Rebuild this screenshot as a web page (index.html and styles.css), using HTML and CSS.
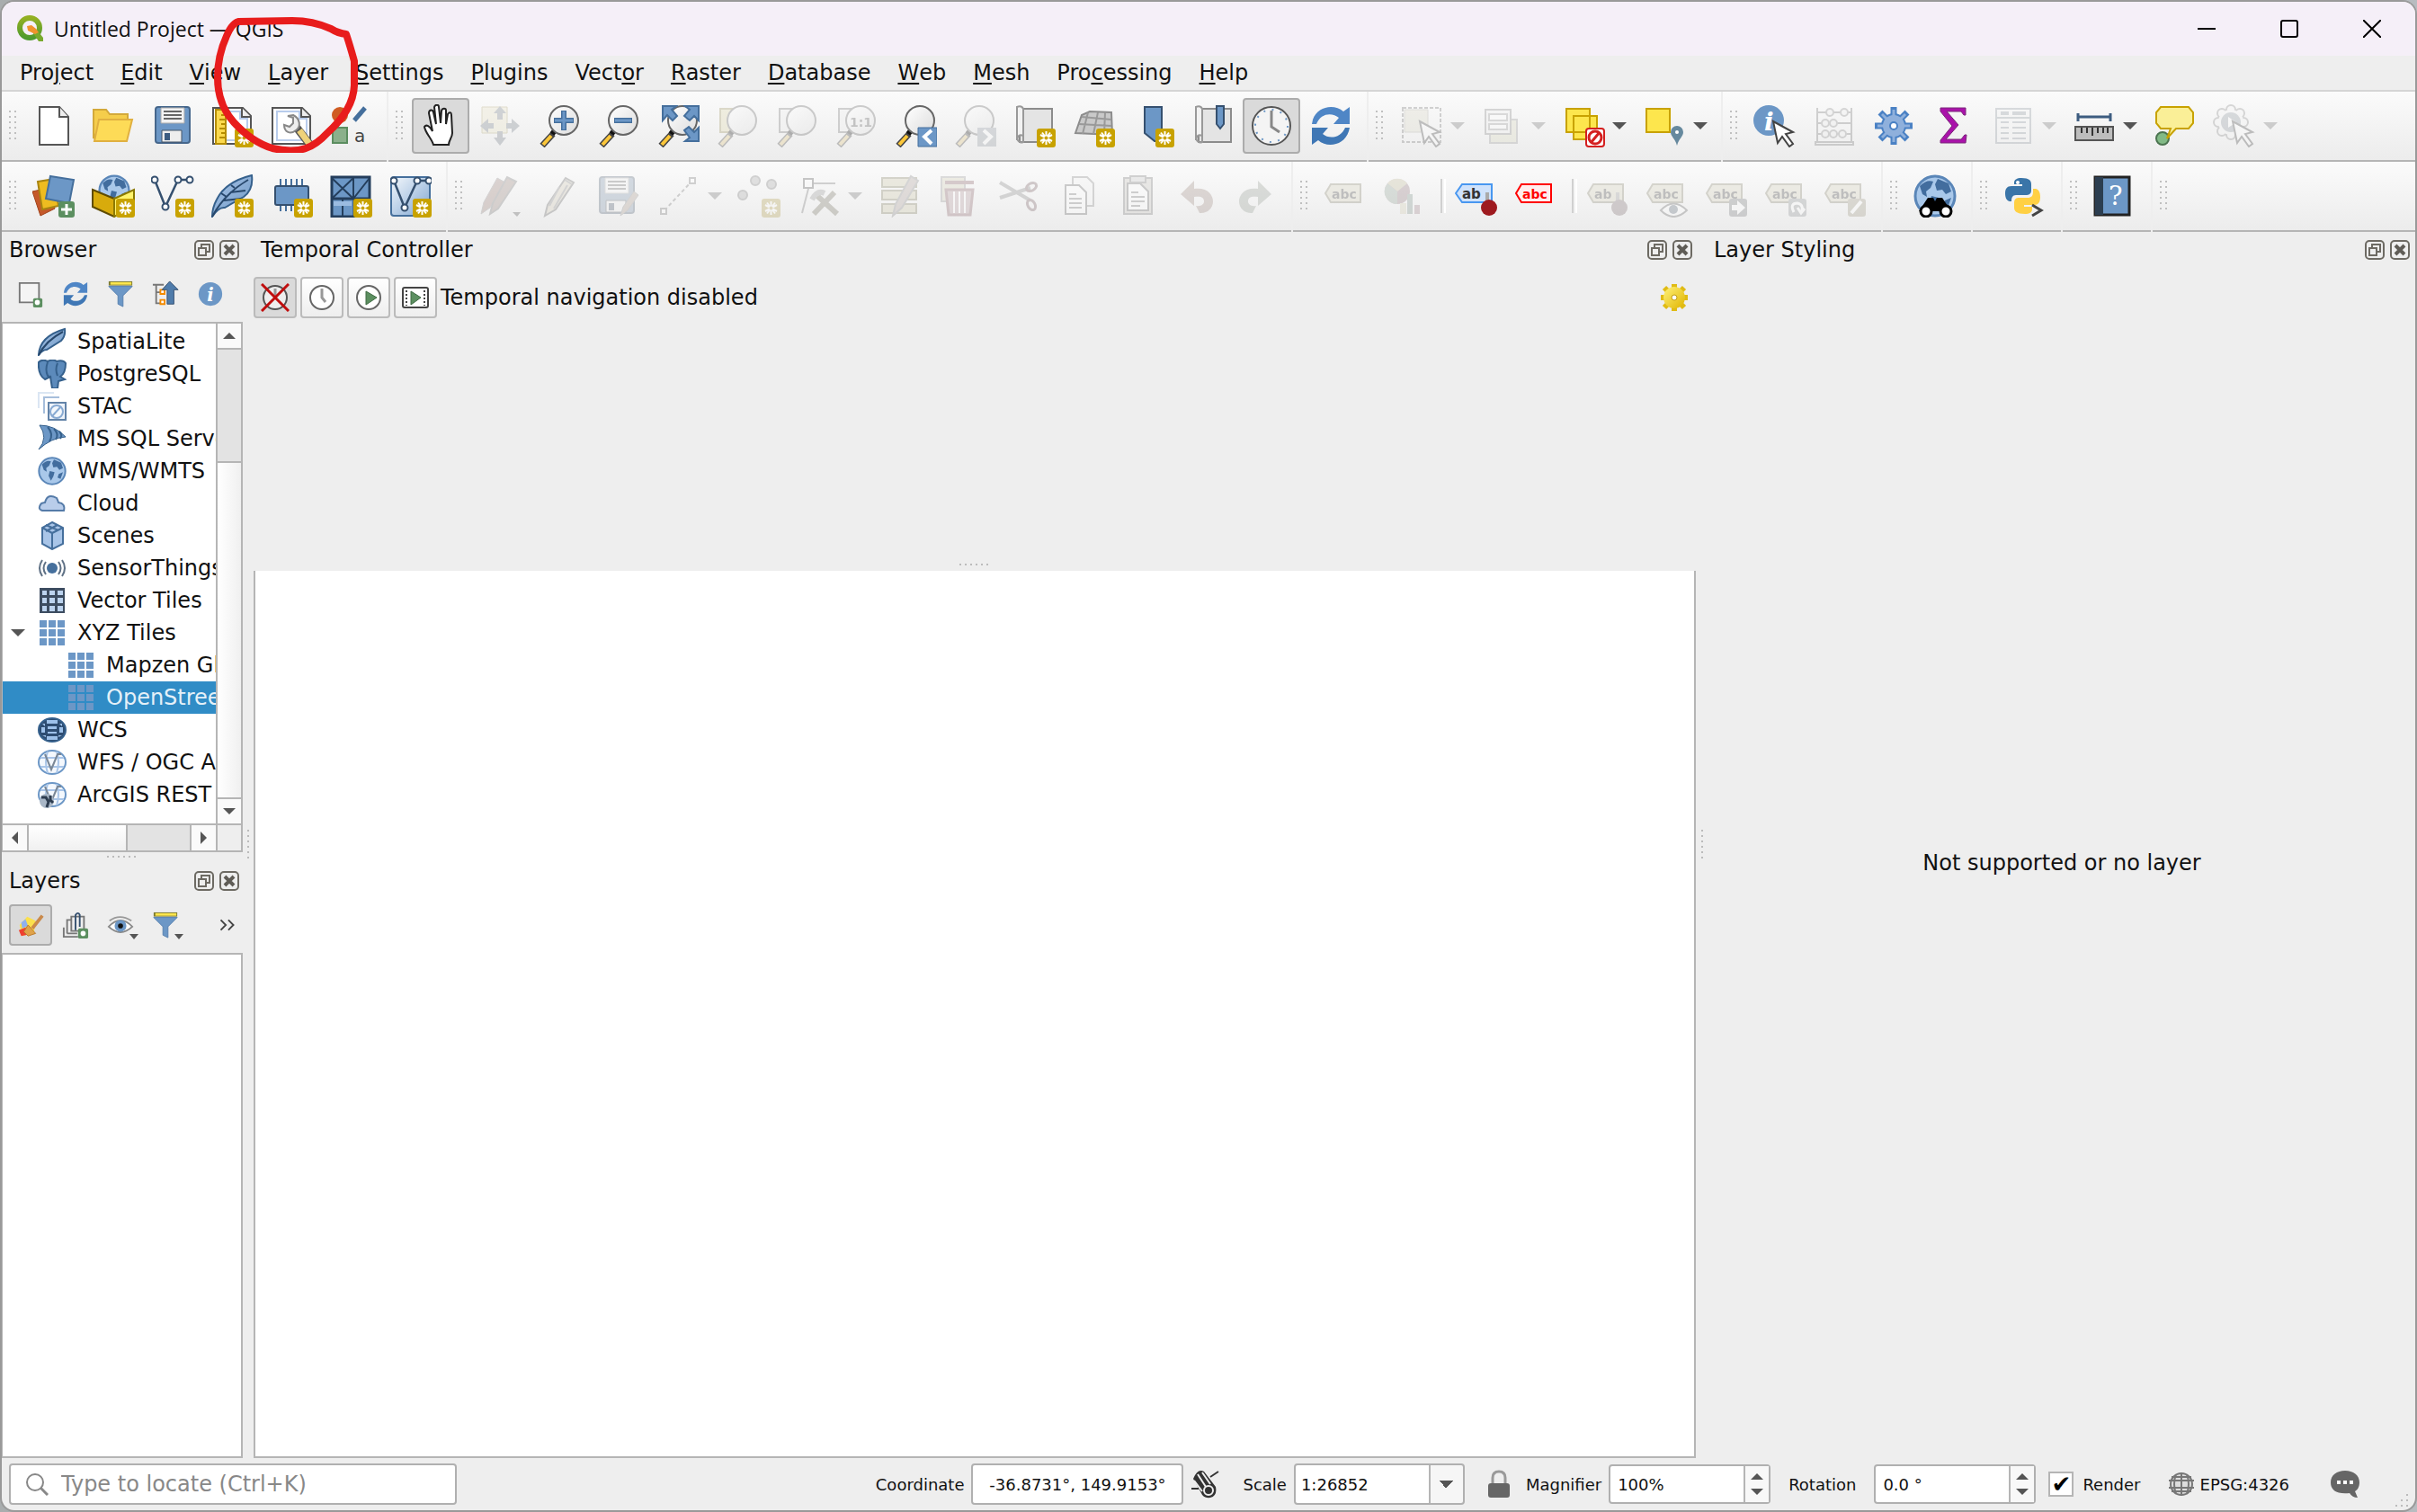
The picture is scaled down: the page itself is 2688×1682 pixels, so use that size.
FILE: index.html
```html
<!DOCTYPE html>
<html lang="en">
<head>
<meta charset="utf-8">
<title>Untitled Project — QGIS</title>
<link rel="stylesheet" href="styles.css">
</head>
<body>
<svg class="defs" aria-hidden="true">
<defs>
<linearGradient id="g-blue" x1="0" y1="0" x2="1" y2="1"><stop offset="0" stop-color="#a9c5e8"/><stop offset="1" stop-color="#6d97c4"/></linearGradient>
<linearGradient id="g-pale" x1="0" y1="0" x2="1" y2="1"><stop offset="0" stop-color="#f4f8fc"/><stop offset="1" stop-color="#7fa6d2"/></linearGradient>
<linearGradient id="g-logo" x1="0" y1="0" x2="0" y2="1"><stop offset="0" stop-color="#93b023"/><stop offset="1" stop-color="#4f9a2e"/></linearGradient>
<linearGradient id="g-gold" x1="0" y1="0" x2="1" y2="1"><stop offset="0" stop-color="#fff27a"/><stop offset="1" stop-color="#e0b400"/></linearGradient>
<linearGradient id="g-glass" x1="0" y1="0" x2="1" y2="1"><stop offset="0" stop-color="#fff"/><stop offset="1" stop-color="#dcdcdc"/></linearGradient>
<symbol id="star" viewBox="0 0 48 48"><rect x="27" y="27" width="21" height="21" rx="3" fill="#c8a200"/><path d="M37.500 30v15M31 34l13 7M44 34l-13 7M33 31.500l9 12M42 31.500l-9 12" stroke="#fff" stroke-width="2"/><circle cx="37.500" cy="37.500" r="2" fill="#c8a200"/></symbol>
<symbol id="lens" viewBox="0 0 48 48"><path d="M17 33L5 46" stroke="#444" stroke-width="7"/><path d="M15 35L6 45" stroke="#fcc73a" stroke-width="4"/><path d="M20 28l-4 5" stroke="#111" stroke-width="6"/><circle cx="29" cy="18" r="16" fill="url(#g-glass)" stroke="#666" stroke-width="2"/></symbol>
<symbol id="cursor" viewBox="0 0 48 48"><path d="M22 19l22 12-8 2 8 11-4 3-8-11-5 7z" fill="#fff" stroke="#444" stroke-width="2"/></symbol>
<symbol id="new" viewBox="0 0 48 48"><path d="M8 3h22l10 11v31H8z" fill="#fff" stroke="#555" stroke-width="2"/><path d="M30 3v11h10" fill="#eee" stroke="#555" stroke-width="2"/></symbol>
<symbol id="open" viewBox="0 0 48 48"><path d="M2 6h14l4 5h20v8H12L2 38z" fill="#f5cd4b" stroke="#d3a93a" stroke-width="2"/><path d="M8 17h37l-6 24H3z" fill="#fddb57" stroke="#e0b040" stroke-width="2"/></symbol>
<symbol id="save" viewBox="0 0 48 48"><rect x="5" y="3" width="38" height="40" rx="3" fill="#6c97c6" stroke="#46678c" stroke-width="2"/><path d="M11 4h26v17H11z" fill="#f2f2f2" stroke="#aaa"/><path d="M14 8h20M14 12h20M14 16h20" stroke="#666" stroke-width="2"/><path d="M12 29h22v13H12z" fill="#eee" stroke="#456" stroke-width="1"/><path d="M15 32h6v8h-6z" fill="#3d5c80"/></symbol>
<symbol id="layout" viewBox="0 0 48 48"><path d="M3 4h33l9 9v31H3z" fill="#fff" stroke="#555" stroke-width="2"/><path d="M35 4v10h10" fill="#eee" stroke="#555" stroke-width="2"/><path d="M8 8h25v8h8v24H8z" fill="none" stroke="#b8ccec" stroke-width="2"/></symbol>
<symbol id="newlayout" viewBox="0 0 48 48"><use href="#layout"/><path d="M6 6h11v38H6z" fill="#fbd94e" stroke="#b58d00" stroke-width="2"/><path d="M12 12h5M10 17h7M12 22h5M10 27h7M12 32h5M10 37h7" stroke="#b58d00" stroke-width="2"/><use href="#star"/></symbol>
<symbol id="manager" viewBox="0 0 48 48"><use href="#layout"/><path d="M30 26l14 18" stroke="#555" stroke-width="9"/><path d="M33 29l11 15" stroke="#eed27a" stroke-width="7"/><path d="M20 13l6 2v6l-4 4-6-2c0 8 7 11 13 6 6-4 5-13-3-17z" fill="#eee" stroke="#888" stroke-width="2"/></symbol>
<symbol id="style" viewBox="0 0 48 48"><circle cx="12" cy="12" r="9" fill="#cf5c22"/><path d="M28 18L40 4" stroke="#456f9c" stroke-width="5"/><path d="M4 26h16v17H4z" fill="#8bb08b" stroke="#5b8d5f" stroke-width="2"/><text x="28" y="42" font-family="DejaVu Sans" font-size="20" fill="#444">a</text></symbol>
<symbol id="pan" viewBox="0 0 48 48"><path d="M16 45c-2-7-9-13-10-20 2-3 6-1 9 5l-4-20c0-4 4-5 5-1l3 13-2-19c1-3 5-3 5 0l2 18 1-14c1-3 5-3 5 0v15l2-11c2-3 4-2 4 1l1 20c0 5-4 8-4 13z" fill="#fff" stroke="#222" stroke-width="2"/></symbol>
<symbol id="pansel" viewBox="0 0 48 48"><path d="M4 3h28v29H4z" fill="#f0e4a8" stroke="#b9a13a"/><path d="M24 2l7 8h-4v7h-6v-7h-4zM24 46l7-9h-4v-7h-6v7h-4zM2 24l9-8v5h6v6h-6v5zM46 24l-9-8v5h-6v6h6v5z" fill="#6f7f92"/></symbol>
<symbol id="zoomin" viewBox="0 0 48 48"><use href="#lens"/><path d="M29 7v22M18 18h22" stroke="#456f9c" stroke-width="6"/><path d="M29 8v20M19 18h20" stroke="#6c97c6" stroke-width="3"/></symbol>
<symbol id="zoomout" viewBox="0 0 48 48"><use href="#lens"/><path d="M19 18h20" stroke="#456f9c" stroke-width="6"/><path d="M20 18h18" stroke="#6c97c6" stroke-width="3"/></symbol>
<symbol id="zoomfull" viewBox="0 0 48 48"><use href="#lens"/><path d="M7 2h15l-5 4 6 7-5 5-6-6-5 6zM47 2v16l-5-5-5 5-6-5 6-7-5-4zM47 41V26l-5 5-6-6-5 4 6 8-5 4z" fill="#6c97c6" stroke="#456f9c" stroke-width="2"/></symbol>
<symbol id="zoomsel" viewBox="0 0 48 48"><path d="M5 5h20v26H5z" fill="#e8d97c" stroke="#a8942c" stroke-width="2"/><use href="#lens"/></symbol>
<symbol id="zoomlayer" viewBox="0 0 48 48"><path d="M5 5h20v26H5z" fill="#eee" stroke="#777" stroke-width="2"/><use href="#lens"/></symbol>
<symbol id="zoomnative" viewBox="0 0 48 48"><use href="#zoomlayer"/><text x="17" y="25" font-family="DejaVu Sans" font-weight="bold" font-size="14" fill="#555">1:1</text></symbol>
<symbol id="zoomlast" viewBox="0 0 48 48"><use href="#lens"/><path d="M27 26h21v21H27z" fill="#6c97c6" stroke="#456f9c" stroke-width="1"/><path d="M42 29l-8 7 8 8" fill="none" stroke="#fff" stroke-width="4"/></symbol>
<symbol id="zoomnext" viewBox="0 0 48 48"><use href="#lens"/><path d="M27 26h21v21H27z" fill="#8a9aab"/><path d="M34 29l8 7-8 8" fill="none" stroke="#fff" stroke-width="4"/></symbol>
<symbol id="map" viewBox="0 0 48 48"><path d="M8 5h36v37H8z" fill="#e4e4e4" stroke="#8c8c8c" stroke-width="2"/><path d="M5 3q5-2 7 2v30q-6-3-7 5z" fill="#f2f2f2" stroke="#999" stroke-width="2"/><path d="M5 38q2 6 7 4V35" fill="none" stroke="#999" stroke-width="2"/></symbol>
<symbol id="newmap" viewBox="0 0 48 48"><use href="#map"/><use href="#star"/></symbol>
<symbol id="map3d" viewBox="0 0 48 48"><path d="M4 32L11 12l9-4 24 1 1 25z" fill="#c9c9c9" stroke="#8c8c8c" stroke-width="2"/><path d="M8 22l36 2M11 14l33 3M18 9l-6 24M29 9l-5 24M37 9l-1 24" stroke="#999" stroke-width="2"/><use href="#star"/></symbol>
<symbol id="bookmark" viewBox="0 0 48 48"><path d="M15 3h19v38h-8l-11-9z" fill="#6c97c6" stroke="#35506f" stroke-width="2"/><use href="#star"/></symbol>
<symbol id="bookmarks" viewBox="0 0 48 48"><use href="#map" x="1"/><path d="M29 2h8v20l-4 5-4-5z" fill="#6c97c6" stroke="#35506f" stroke-width="2"/></symbol>
<symbol id="clock" viewBox="0 0 48 48"><circle cx="24" cy="24" r="21" fill="#f4f4f4" stroke="#555" stroke-width="2"/><circle cx="24" cy="24" r="18" fill="none" stroke="#6c97c6" stroke-width="2" stroke-dasharray="2 7.420"/><path d="M24 7v18l9 6" fill="none" stroke="#888" stroke-width="3"/></symbol>
<symbol id="refresh" viewBox="0 0 48 48"><path d="M4 17C9 2 28-1 38 8l7-5v19H27l6-7C26 9 13 9 8 22H3z" fill="#4f86c6"/><path d="M44 30C39 46 20 49 10 40l-7 5V26h18l-6 7c7 6 20 5 25-7h5z" fill="#3f77b5"/></symbol>
<symbol id="select" viewBox="0 0 48 48"><path d="M3 4h42v38H3z" fill="none" stroke="#777" stroke-width="2" stroke-dasharray="4 2"/><path d="M5 6h26v25H5z" fill="#dcd9b6" stroke="#a8a592"/><use href="#cursor"/></symbol>
<symbol id="form" viewBox="0 0 48 48"><path d="M10 17h30v26H10z" fill="#dcd9a8" stroke="#999" stroke-width="2"/><path d="M5 6h28v27H5z" fill="#eee" stroke="#888" stroke-width="2"/><path d="M9 11h20v7H9zM9 22h20v6H9z" fill="#fff" stroke="#999" stroke-width="2"/></symbol>
<symbol id="deselect" viewBox="0 0 48 48"><path d="M5 5h26v26H5zM13 13h26v26H13z" fill="#fde64d" stroke="#c8a200" stroke-width="2"/><rect x="27" y="27" width="20" height="20" rx="3" fill="#fff" stroke="#d42020" stroke-width="2"/><circle cx="37" cy="37" r="7" fill="none" stroke="#d42020" stroke-width="3"/><path d="M32 43l10-12" stroke="#d42020" stroke-width="3"/></symbol>
<symbol id="selloc" viewBox="0 0 48 48"><path d="M4 5h26v26H4z" fill="#fde64d" stroke="#c8a200" stroke-width="2"/><path d="M38 46c-2-8-7-10-7-15a7 7 0 0 1 14 0c0 5-5 7-7 15z" fill="#66899e"/><circle cx="38" cy="31" r="2" fill="#fff"/></symbol>
<symbol id="identify" viewBox="0 0 48 48"><circle cx="17" cy="18" r="17" fill="#6c97c6"/><text x="12" y="29" font-family="DejaVu Serif" font-style="italic" font-weight="bold" font-size="28" fill="#fff">i</text><use href="#cursor"/></symbol>
<symbol id="abacus" viewBox="0 0 48 48"><path d="M5 4v38M43 4v38M5 9h38M5 21h38M5 33h38" stroke="#777" stroke-width="2"/><path d="M3 42h42v3H3z" fill="none" stroke="#777" stroke-width="2"/><g fill="#eee" stroke="#888" stroke-width="2"><circle cx="19" cy="9" r="4"/><circle cx="35" cy="9" r="4"/><circle cx="14" cy="21" r="4"/><circle cx="23" cy="21" r="4"/><circle cx="14" cy="33" r="4"/><circle cx="23" cy="33" r="4"/><circle cx="33" cy="33" r="4"/></g></symbol>
<symbol id="gear" viewBox="0 0 48 48"><path d="M24 3v42M3 24h42M9 9l30 30M39 9L9 39" stroke="#4a81c4" stroke-width="7"/><circle cx="24" cy="24" r="13" fill="#8fb0dc" stroke="#4a81c4" stroke-width="2"/><path d="M24 6v36M6 24h36M11 11l26 26M37 11L11 37" stroke="#8fb0dc" stroke-width="3"/><circle cx="24" cy="24" r="4" fill="#fff" stroke="#4a81c4" stroke-width="2"/></symbol>
<symbol id="sigma" viewBox="0 0 48 48"><path d="M10 4h28v8h-2l-3-4H17l13 15-14 16h17l4-5h2l-1 9H10v-3l13-16L10 8z" fill="#aa12aa" stroke="#7a2a7a" stroke-width="1"/></symbol>
<symbol id="table" viewBox="0 0 48 48"><path d="M5 5h38v38H5z" fill="#f4f4f4" stroke="#8898a8" stroke-width="2"/><path d="M5 15h38" stroke="#8898a8" stroke-width="2"/><path d="M10 10h9M23 10h15" stroke="#8898a8" stroke-width="4"/><path d="M10 20h9M23 20h15M10 26h9M23 26h15M10 32h9M23 32h15M10 38h9M23 38h15" stroke="#8898a8" stroke-width="2"/></symbol>
<symbol id="measure" viewBox="0 0 48 48"><path d="M6 10v9M42 10v9M6 14h36" stroke="#3d5c80" stroke-width="3"/><path d="M3 25h42v15H3z" fill="#bdbdbd" stroke="#555" stroke-width="2"/><path d="M10 26v6M16 26v6M22 26v9M28 26v6M34 26v6M39 26v6" stroke="#333" stroke-width="2"/></symbol>
<symbol id="tip" viewBox="0 0 48 48"><path d="M4 38a7 7 0 1 0 14 0 7 7 0 1 0-14 0" fill="#82ba86" stroke="#4c7450" stroke-width="2"/><path d="M9 3h31l5 6v12l-5 6H26L16 38l4-11H9l-5-6V9z" fill="#faef97" stroke="#c8a200" stroke-width="2"/></symbol>
<symbol id="action" viewBox="0 0 48 48"><g fill="#f4f4f4" stroke="#888" stroke-width="2"><circle cx="20" cy="6" r="5"/><circle cx="30" cy="10" r="5"/><circle cx="34" cy="20" r="5"/><circle cx="30" cy="30" r="5"/><circle cx="20" cy="34" r="5"/><circle cx="10" cy="30" r="5"/><circle cx="6" cy="20" r="5"/><circle cx="10" cy="10" r="5"/></g><circle cx="20" cy="20" r="14" fill="#f4f4f4"/><circle cx="20" cy="20" r="11" fill="#8898a8"/><path d="M17 14l9 6-9 6z" fill="#fff"/><use href="#cursor"/></symbol>
<symbol id="dsm" viewBox="0 0 48 48"><path d="M0 19l18-4 7 23-16 8z" fill="#c5592b" stroke="#a1441b"/><path d="M6 8l19-3 4 30-18 4z" fill="#eebc20" stroke="#a88411" stroke-width="2"/><path d="M20 2l26 4-5 26-26-5z" fill="#6c97c6" stroke="#456f9c" stroke-width="2"/><rect x="29" y="30" width="18" height="18" rx="3" fill="#5c8f60"/><path d="M38 33v12M32 39h12" stroke="#fff" stroke-width="3"/></symbol>
<symbol id="globe" viewBox="0 0 48 48"><circle cx="24" cy="24" r="22" fill="#a9c8ea" stroke="#5a86b8" stroke-width="3"/><path d="M7 13q8-8 15-5l-3 7-5 4 1 6-5-3zM27 5l12 5 3 9-6 3-4-5-6 1-2-7zM20 24l8 2-2 7-4 7-4-8zM35 29l7-3-4 11-5-2z" fill="#426d9e"/></symbol>
<symbol id="gpkg" viewBox="0 0 48 48"><use href="#globe" x="7" y="0" width="36" height="36"/><path d="M1 17l24 10v20L1 36z" fill="#d8ab0c" stroke="#5f4c00" stroke-width="2"/><path d="M25 27l22-10v19L25 47z" fill="#fff36c" stroke="#8b7900" stroke-width="2"/><use href="#star"/></symbol>
<symbol id="vpoly" viewBox="0 0 48 48"><path d="M4 6l12 30L30 6h12" fill="none" stroke="#35506f" stroke-width="2.500"/><g fill="#fff" stroke="#35506f" stroke-width="2"><circle cx="4" cy="6" r="3.500"/><circle cx="16" cy="36" r="3.500"/><circle cx="30" cy="6" r="3.500"/><circle cx="43" cy="6" r="3.500"/></g></symbol>
<symbol id="shp" viewBox="0 0 48 48"><use href="#vpoly"/><use href="#star"/></symbol>
<symbol id="feather" viewBox="0 0 48 48"><path d="M2 47q0-10 5-19Q17 8 46 1q2 16-9 24L16 37q-7-1-14 10z" fill="url(#g-blue)" stroke="#35608c" stroke-width="2"/><path d="M2 47Q15 22 42 6M15 29l19-2M22 20l17-2M12 21l6 4M23 12l4 3" fill="none" stroke="#28486c" stroke-width="2"/></symbol>
<symbol id="quill" viewBox="0 0 32 32"><path d="M1 31Q2 10 30 2q1 8-4 13L10 25q-5 0-9 6z" fill="url(#g-blue)" stroke="#35608c" stroke-width="2"/><path d="M1 31Q9 15 28 5" fill="none" stroke="#28486c" stroke-width="2"/></symbol>
<symbol id="spatialite" viewBox="0 0 48 48"><use href="#feather"/><use href="#star"/></symbol>
<symbol id="memory" viewBox="0 0 48 48"><path d="M12 5v36M18 5v36M24 5v36M30 5v36M36 5v36" stroke="#456f9c" stroke-width="2"/><rect x="6" y="13" width="37" height="21" rx="2" fill="#6c97c6" stroke="#35506f" stroke-width="2"/><use href="#star"/></symbol>
<symbol id="mesh" viewBox="0 0 48 48"><path d="M3 3h42v24H3zM3 27h25v20H3z" fill="#6c97c6" stroke="#243e5c" stroke-width="3"/><path d="M27 3v24M3 4l24 23M27 4L3 27M45 4L27 27M15 27v20" stroke="#243e5c" stroke-width="2"/><path d="M5 30h20v5H5z" fill="#9bbbe0"/><use href="#star"/></symbol>
<symbol id="virtual" viewBox="0 0 48 48"><rect x="3" y="3" width="43" height="43" rx="3" fill="url(#g-pale)" stroke="#456f9c" stroke-width="2"/><use href="#vpoly" x="2" y="1"/><use href="#star"/></symbol>
<symbol id="pencil" viewBox="0 0 48 48"><path d="M8 46l3-12L31 4l9 5-20 30z" fill="#d8c9a0" stroke="#666" stroke-width="2"/><path d="M30 6l8 5M24 14L13 35M33 12L18 38" stroke="#888" stroke-width="2"/></symbol>
<symbol id="pencils" viewBox="0 0 48 48"><path d="M3 44l3-13L21 4l9 5-17 28z" fill="#b07a6a" stroke="#888"/><path d="M13 44l3-12L32 3l10 5-20 30z" fill="#a88070" stroke="#777" stroke-width="2"/><path d="M38 42h9l-4 5z" fill="#555"/></symbol>
<symbol id="saveedit" viewBox="0 0 48 48"><use href="#save" x="-2"/><path d="M26 46l3-10 12-17 5 4-12 17z" fill="#b8977f" stroke="#888"/></symbol>
<symbol id="segment" viewBox="0 0 48 48"><path d="M8 40L38 8" stroke="#777" stroke-width="2" stroke-dasharray="4 3"/><path d="M4 38h6v6H4zM36 4h6v6h-6z" fill="#fff" stroke="#777" stroke-width="2"/></symbol>
<symbol id="points" viewBox="0 0 48 48"><g fill="#aaa" stroke="#777" stroke-width="2"><circle cx="20" cy="7" r="5"/><circle cx="38" cy="11" r="5"/><circle cx="6" cy="23" r="5"/></g><use href="#star"/></symbol>
<symbol id="vertex" viewBox="0 0 48 48"><path d="M5 43l8-31M15 10h27" stroke="#777" stroke-width="2"/><path d="M7 5h10v10H7z" fill="#fff" stroke="#555" stroke-width="2"/><path d="M18 44l23-24M22 24l22 20" stroke="#7d7656" stroke-width="6"/><path d="M16 28q6-11 14-7" fill="none" stroke="#999" stroke-width="6"/></symbol>
<symbol id="multiedit" viewBox="0 0 48 48"><path d="M5 4h38v10H5zM5 18h38v10H5zM5 33h38v10H5z" fill="#d2cb8a" stroke="#888246" stroke-width="2"/><path d="M17 46l3-13L37 2l8 5-18 30z" fill="#b99d94" stroke="#888" stroke-width="2"/></symbol>
<symbol id="trash" viewBox="0 0 48 48"><path d="M5 3h26v27H5z" fill="#d7d2a0" stroke="#999" stroke-width="2"/><path d="M9 9h32" stroke="#a85a66" stroke-width="4"/><path d="M10 17h30l-3 28H13z" fill="#c9949c" stroke="#a85a66" stroke-width="3"/><path d="M19 19v24M25 19v24M31 19v24" stroke="#fff" stroke-width="2"/></symbol>
<symbol id="cut" viewBox="0 0 48 48"><path d="M4 9l34 20M4 26l34-11" stroke="#888" stroke-width="4"/><g fill="none" stroke="#8c5a62" stroke-width="3"><ellipse cx="39" cy="14" rx="6" ry="4" transform="rotate(-30 39 14)"/><ellipse cx="39" cy="34" rx="6" ry="4" transform="rotate(60 39 34)"/></g></symbol>
<symbol id="copy" viewBox="0 0 48 48"><path d="M19 3h16l7 7v25H19z" fill="#f4f4f4" stroke="#888" stroke-width="2"/><path d="M11 12h15l8 8v24H11z" fill="#fff" stroke="#666" stroke-width="2"/><path d="M15 22h8M15 27h14M15 32h14M15 37h14" stroke="#777" stroke-width="2"/></symbol>
<symbol id="paste" viewBox="0 0 48 48"><path d="M10 4h31v40H10z" fill="#c9c4b8" stroke="#777" stroke-width="2"/><path d="M14 10h14l9 9v21H14z" fill="#fff" stroke="#666" stroke-width="2"/><path d="M17 2h17v7H17z" fill="#ccc" stroke="#777" stroke-width="2"/><path d="M18 20h8M18 25h15M18 30h15M18 35h10" stroke="#777" stroke-width="2"/></symbol>
<symbol id="undo" viewBox="0 0 48 48"><path d="M7 22L22 7v9c15-2 21 7 21 14 0 8-7 14-15 13l-4-8c6 1 9-2 9-5 0-5-4-6-11-5v10z" fill="#b08a7a"/></symbol>
<symbol id="redo" viewBox="0 0 48 48"><path d="M42 22L27 7v9C12 14 6 23 6 30c0 8 7 14 15 13l4-8c-6 1-9-2-9-5 0-5 4-6 11-5v10z" fill="#93a08e"/></symbol>
<symbol id="tag" viewBox="0 0 48 48"><path d="M2 21l6-10h33v20H8z" fill="#d9d2a4" stroke="#8c8659" stroke-width="2"/></symbol>
<symbol id="abc" viewBox="0 0 48 48"><use href="#tag"/><text x="9" y="27" font-family="DejaVu Sans" font-weight="bold" font-size="14" fill="#444">abc</text></symbol>
<symbol id="chart" viewBox="0 0 48 48"><circle cx="16" cy="19" r="14" fill="#a77480"/><path d="M16 19L5 10a14 14 0 0 1 22 0z" fill="#c9bc7a"/><path d="M16 19L5 10a14 14 0 0 0 11 23z" fill="#86a78d"/><path d="M19 32h7v12h-7z" fill="#d9cf99"/><path d="M27 22h6v22h-6z" fill="#729a8a"/><path d="M35 34h6v10h-6z" fill="#b98090"/></symbol>
<symbol id="pinlabel" viewBox="0 0 48 48"><path d="M1 21l7-10h33v20H8z" fill="#cfe2fb" stroke="#4897f0" stroke-width="2"/><text x="8" y="27" font-family="DejaVu Sans" font-weight="bold" font-size="15" fill="#333">ab</text><path d="M36 20v12" stroke="#aaa" stroke-width="4"/><circle cx="38" cy="37" r="9" fill="#9e1a1f"/></symbol>
<symbol id="redlabel" viewBox="0 0 48 48"><path d="M2 21l6-10h33v20H8z" fill="#fee" stroke="#f00" stroke-width="2"/><text x="9" y="27" font-family="DejaVu Sans" font-weight="bold" font-size="14" fill="#f00">abc</text></symbol>
<symbol id="pin2" viewBox="0 0 48 48"><use href="#tag"/><text x="9" y="27" font-family="DejaVu Sans" font-weight="bold" font-size="14" fill="#444">ab</text><path d="M35 20v14" stroke="#999" stroke-width="4"/><circle cx="37" cy="37" r="9" fill="#8c6a70"/></symbol>
<symbol id="eyelabel" viewBox="0 0 48 48"><use href="#abc"/><path d="M17 40q14-15 29 0-15 14-29 0z" fill="#fff" stroke="#666" stroke-width="2"/><circle cx="31" cy="39" r="5" fill="#58708c"/></symbol>
<symbol id="movelabel" viewBox="0 0 48 48"><use href="#abc"/><rect x="27" y="27" width="20" height="20" rx="3" fill="#777c80"/><path d="M30 34h6v-5l9 8-9 8v-5h-6z" fill="#fff"/></symbol>
<symbol id="rotlabel" viewBox="0 0 48 48"><use href="#abc"/><rect x="27" y="27" width="20" height="20" rx="3" fill="#8c9498"/><path d="M33 42q-5-10 4-10 8 2 4 11M37 37l4 6 4-5" fill="none" stroke="#fff" stroke-width="3"/></symbol>
<symbol id="editlabel" viewBox="0 0 48 48"><use href="#abc"/><rect x="27" y="27" width="20" height="20" rx="3" fill="#a39a70"/><path d="M31 43l11-13" stroke="#fff" stroke-width="4"/></symbol>
<symbol id="meta" viewBox="0 0 48 48"><use href="#globe"/><path d="M16 26h6l2 4 2-4h6l10 15H6z" fill="#000"/><g fill="#fff" stroke="#000" stroke-width="3"><circle cx="14" cy="41" r="6"/><circle cx="36" cy="41" r="6"/></g></symbol>
<symbol id="python" viewBox="0 0 48 48"><path d="M20 4c9 0 11 3 11 7v7c0 4-3 5-6 5H14c-4 0-5 3-5 7H7c-4-1-5-5-5-9 0-5 2-8 7-8h12v-2h-9V9c0-3 3-5 8-5z" fill="#3a75a8"/><circle cx="16" cy="9" r="2" fill="#fff"/><path d="M24 44c-9 0-12-3-12-7v-5c0-5 2-6 6-6h9c4 0 6-2 6-7v-3h3c4 1 5 5 5 9 0 6-2 9-7 9H23v2h9v3c0 3-3 5-8 5z" fill="#ffd043"/><path d="M32 34l10 6-10 6" fill="none" stroke="#444" stroke-width="3"/></symbol>
<symbol id="help" viewBox="0 0 48 48"><path d="M2 3h38v42H2z" fill="#6c97c6" stroke="#222" stroke-width="3"/><path d="M2 3h9v42H2z" fill="#2c3e50"/><text x="17" y="34" font-family="DejaVu Serif" font-size="29" fill="#fff">?</text></symbol>
<symbol id="float" viewBox="0 0 22 22"><rect x="1" y="1" width="20" height="20" rx="4" fill="none" stroke="#6d6a63" stroke-width="2"/><path d="M8 8V5h9v8h-3M5 9h8v8H5z" fill="none" stroke="#6d6a63" stroke-width="2"/></symbol>
<symbol id="close" viewBox="0 0 22 22"><rect x="1" y="1" width="20" height="20" rx="4" fill="none" stroke="#6d6a63" stroke-width="2"/><path d="M6 6l10 10M16 6L6 16" stroke="#5f5c56" stroke-width="4"/></symbol>
<symbol id="addlayer" viewBox="0 0 32 32"><path d="M3 3h23v23H3z" fill="#f4f4f4" stroke="#777" stroke-width="2"/><rect x="19" y="21" width="11" height="11" rx="2" fill="#5c8f60"/><circle cx="24" cy="26" r="3" fill="#fff"/></symbol>
<symbol id="funnel" viewBox="0 0 32 32"><path d="M2 7h28L19 18v13l-6-3V18z" fill="#6c97c6" stroke="#557fae"/><path d="M2 1h28v5H2z" fill="#7b7a30"/><path d="M4 2h25v3H4z" fill="#fde64d"/></symbol>
<symbol id="collapse" viewBox="0 0 32 32"><path d="M1 5h13M5 5v22h6M5 14h6" fill="none" stroke="#777" stroke-width="2"/><path d="M10 11h5v5h-5zM10 23h5v5h-5z" fill="#fff" stroke="#f28a00" stroke-width="2"/><path d="M21 1l10 10h-5v17h-8V11h-6z" fill="#4f7cab" stroke="#35506f"/></symbol>
<symbol id="info" viewBox="0 0 32 32"><circle cx="16" cy="16" r="14" fill="#6c97c6"/><text x="12" y="24" font-family="DejaVu Serif" font-style="italic" font-weight="bold" font-size="21" fill="#fff">i</text></symbol>
<symbol id="postgres" viewBox="0 0 32 32"><path d="M1 3q4-4 10-1 6-3 10 0 7-2 10 2 0 11-6 15l5 3-7 2-1 8h-6l-2-13-6 3Q0 17 1 3z" fill="#5c8abb" stroke="#35608c" stroke-width="2"/><path d="M11 3Q8 11 11 18l4 2M22 4q-3 7 0 14" fill="none" stroke="#35608c" stroke-width="2"/></symbol>
<symbol id="stac" viewBox="0 0 32 32"><path d="M1 18V1h17" fill="none" stroke="#dbe6f3" stroke-width="2"/><path d="M7 24V6h17" fill="none" stroke="#a6bedb" stroke-width="2"/><path d="M12 12h19v19H12z" fill="#eef3fa" stroke="#6283a8" stroke-width="2"/><circle cx="21" cy="22" r="7" fill="#f4f8fc" stroke="#88aad2" stroke-width="2"/><path d="M16 27l10-11" stroke="#88aad2" stroke-width="2"/></symbol>
<symbol id="mssql" viewBox="0 0 32 32"><path d="M2 1q17 0 29 13Q15 15 1 28q11-13 1-27z" fill="#6c97c6" stroke="#35608c"/><path d="M11 3q7 8 2 16M18 5q6 6 2 12M24 8q4 4 1 8" fill="none" stroke="#35608c" stroke-width="2"/></symbol>
<symbol id="cloud" viewBox="0 0 32 32"><path d="M5 24q-6-2-1-8 3-1 4-1 3-11 13-5 1 2 2 5 8 1 6 9z" fill="#b9cdea" stroke="#557ba8" stroke-width="2"/></symbol>
<symbol id="cube" viewBox="0 0 32 32"><path d="M16 1l12 6v18l-12 6-11-6V7z" fill="#a9c5e8" stroke="#456f9c" stroke-width="2"/><path d="M5 7l11 6 12-6M16 13v18M9 4l14 6M22 4L9 11" fill="none" stroke="#456f9c" stroke-width="2"/></symbol>
<symbol id="sensor" viewBox="0 0 32 32"><circle cx="16" cy="16" r="6" fill="#456f9c"/><path d="M9 9q-5 7 0 14M5 7q-6 9 0 18M23 9q5 7 0 14M27 7q6 9 0 18" fill="none" stroke="#5f7185" stroke-width="2"/></symbol>
<symbol id="grid" viewBox="0 0 32 32"><path d="M2 2h28v28H2z" fill="#3c4c60"/><path d="M5 5h5v5H5zM13 5h6v5h-6zM22 5h6v5h-6zM5 13h5v6H5zM13 13h6v6h-6zM22 13h6v6h-6zM5 22h5v6H5zM13 22h6v6h-6zM22 22h6v6h-6z" fill="#bcd3ee"/></symbol>
<symbol id="tiles" viewBox="0 0 32 32"><path d="M2 2h8v8H2zM12 2h8v8h-8zM22 2h8v8h-8zM2 12h8v8H2zM12 12h8v8h-8zM22 12h8v8h-8zM2 22h8v8H2zM12 22h8v8h-8zM22 22h8v8h-8z" fill="#6c97c6"/></symbol>
<symbol id="wcs" viewBox="0 0 32 32"><ellipse cx="16" cy="16" rx="15" ry="13" fill="#2e4d72" stroke="#35608c" stroke-width="2"/><path d="M10 5h12v4H10zM4 13h4v6H4zM11 12h10v3H11zM24 13h4v6h-4zM11 18h10v2H11zM10 23h12v4H10zM5 9h3v3zM24 9h3v3zM5 22h4v2zM23 22h4l-4 2z" fill="#9dc1ea"/></symbol>
<symbol id="wfs" viewBox="0 0 32 32"><ellipse cx="16" cy="16" rx="15" ry="13" fill="#f4f8fd" stroke="#6c97c6" stroke-width="2"/><path d="M3 11h26M3 21h26M11 4q-4 12 0 24M21 4q4 12 0 24" fill="none" stroke="#a9c5e8" stroke-width="2"/><path d="M8 7l7 17L22 7h4" fill="none" stroke="#7a8796" stroke-width="2"/></symbol>
<symbol id="arcgis" viewBox="0 0 32 32"><use href="#wfs"/><circle cx="10" cy="23" r="8" fill="#a9b7c7"/><path d="M4 19h5l3 5-2 6M14 17v5l3 3" fill="none" stroke="#2e3d50" stroke-width="3"/></symbol>
<symbol id="brush" viewBox="0 0 32 32"><path d="M3 16l9-10 10 5-2 14-14 4z" fill="#fbe04c"/><path d="M2 22l8-3 5 8-10 2z" fill="#ef4030"/><path d="M5 13l5-4 3 8-7 3z" fill="#8fb0ee"/><path d="M13 16l9 10-9 3-5-5z" fill="#e0a34a" stroke="#b9792c"/><path d="M18 20L30 5" stroke="#c9894a" stroke-width="4"/></symbol>
<symbol id="addgroup" viewBox="0 0 32 32"><path d="M2 19v11h17M6 26V10h6M6 26h12" fill="none" stroke="#777" stroke-width="2"/><path d="M11 6h15v17H11z" fill="#eee" stroke="#777" stroke-width="2"/><path d="M16 22V4q3-4 5 0v14" fill="none" stroke="#35506f" stroke-width="2"/><rect x="19" y="20" width="12" height="12" rx="2" fill="#5c8f60"/><circle cx="25" cy="26" r="3" fill="#fff"/></symbol>
<symbol id="eye" viewBox="0 0 32 32"><path d="M2 18Q16 3 30 18 16 31 2 18z" fill="#fff" stroke="#888" stroke-width="2"/><path d="M3 11q12-9 26 0" fill="none" stroke="#999" stroke-width="2"/><circle cx="16" cy="17" r="7" fill="#6c97c6"/><circle cx="16" cy="17" r="3" fill="#111"/></symbol>
<symbol id="goldgear" viewBox="0 0 32 32"><path d="M16 1v30M1 16h30M5 5l22 22M27 5L5 27" stroke="#e0bb14" stroke-width="6"/><circle cx="16" cy="16" r="12" fill="url(#g-gold)"/><circle cx="16" cy="16" r="3" fill="#fff" stroke="#c39d10" stroke-width="1"/></symbol>
</defs>
</svg>

<div class="window">
  <header class="titlebar">
    <svg class="logo" viewBox="0 0 30 30"><circle cx="14" cy="14" r="11" fill="none" stroke="url(#g-logo)" stroke-width="6"/><path d="M16 17l6-1 7 9v4h-5z" fill="#78a92c"/><path d="M11 12l5-1 5 4 3 4-4 2-8-4z" fill="#f0932c"/></svg>
    <h1>Untitled Project — QGIS</h1>
    <div class="winbuttons">
      <button aria-label="Minimize"><svg viewBox="0 0 20 20"><path d="M0 10h20" stroke="#000" stroke-width="2"/></svg></button>
      <button aria-label="Maximize"><svg viewBox="0 0 20 20"><rect x="1" y="1" width="18" height="18" rx="2" fill="none" stroke="#000" stroke-width="2"/></svg></button>
      <button aria-label="Close"><svg viewBox="0 0 20 20"><path d="M0 0l20 20M20 0L0 20" stroke="#000" stroke-width="2"/></svg></button>
    </div>
  </header>

  <nav class="menubar" aria-label="Main menu">
    <button>Pro<u>j</u>ect</button><button><u>E</u>dit</button><button><u>V</u>iew</button><button><u>L</u>ayer</button><button><u>S</u>ettings</button><button><u>P</u>lugins</button><button>Vect<u>o</u>r</button><button><u>R</u>aster</button><button><u>D</u>atabase</button><button><u>W</u>eb</button><button><u>M</u>esh</button><button>Pro<u>c</u>essing</button><button><u>H</u>elp</button>
  </nav>

  <div class="toolrow">
    <div class="tools"><i class="grip"></i>
      <button aria-label="New Project"><svg><use href="#new"/></svg></button>
      <button aria-label="Open Project"><svg><use href="#open"/></svg></button>
      <button aria-label="Save Project"><svg><use href="#save"/></svg></button>
      <button aria-label="New Print Layout"><svg><use href="#newlayout"/></svg></button>
      <button aria-label="Layout Manager"><svg><use href="#manager"/></svg></button>
      <button aria-label="Style Manager"><svg><use href="#style"/></svg></button>
    </div>
    <div class="tools"><i class="grip"></i>
      <button class="on" aria-label="Pan Map"><svg><use href="#pan"/></svg></button>
      <button disabled aria-label="Pan to Selection"><svg><use href="#pansel"/></svg></button>
      <button aria-label="Zoom In"><svg><use href="#zoomin"/></svg></button>
      <button aria-label="Zoom Out"><svg><use href="#zoomout"/></svg></button>
      <button aria-label="Zoom Full"><svg><use href="#zoomfull"/></svg></button>
      <button disabled aria-label="Zoom to Selection"><svg><use href="#zoomsel"/></svg></button>
      <button disabled aria-label="Zoom to Layer"><svg><use href="#zoomlayer"/></svg></button>
      <button disabled aria-label="Zoom to Native Resolution"><svg><use href="#zoomnative"/></svg></button>
      <button aria-label="Zoom Last"><svg><use href="#zoomlast"/></svg></button>
      <button disabled aria-label="Zoom Next"><svg><use href="#zoomnext"/></svg></button>
      <button aria-label="New Map View"><svg><use href="#newmap"/></svg></button>
      <button aria-label="New 3D Map View"><svg><use href="#map3d"/></svg></button>
      <button aria-label="New Bookmark"><svg><use href="#bookmark"/></svg></button>
      <button aria-label="Show Bookmarks"><svg><use href="#bookmarks"/></svg></button>
      <button class="on" aria-label="Temporal Controller"><svg><use href="#clock"/></svg></button>
      <button aria-label="Refresh"><svg><use href="#refresh"/></svg></button>
    </div>
    <div class="tools"><i class="grip"></i>
      <button class="drop" disabled aria-label="Select Features"><svg><use href="#select"/></svg></button>
      <button class="drop" disabled aria-label="Select by Value"><svg><use href="#form"/></svg></button>
      <button class="drop" aria-label="Deselect Features"><svg><use href="#deselect"/></svg></button>
      <button class="drop" aria-label="Select by Location"><svg><use href="#selloc"/></svg></button>
    </div>
    <div class="tools"><i class="grip"></i>
      <button aria-label="Identify Features"><svg><use href="#identify"/></svg></button>
      <button disabled aria-label="Field Calculator"><svg><use href="#abacus"/></svg></button>
      <button aria-label="Toolbox"><svg><use href="#gear"/></svg></button>
      <button aria-label="Statistical Summary"><svg><use href="#sigma"/></svg></button>
      <button class="drop" disabled aria-label="Attribute Table"><svg><use href="#table"/></svg></button>
      <button class="drop" aria-label="Measure"><svg><use href="#measure"/></svg></button>
      <button aria-label="Map Tips"><svg><use href="#tip"/></svg></button>
      <button class="drop" disabled aria-label="Run Feature Action"><svg><use href="#action"/></svg></button>
    </div>
  </div>

  <div class="toolrow">
    <div class="tools"><i class="grip"></i>
      <button aria-label="Data Source Manager"><svg><use href="#dsm"/></svg></button>
      <button aria-label="New GeoPackage Layer"><svg><use href="#gpkg"/></svg></button>
      <button aria-label="New Shapefile Layer"><svg><use href="#shp"/></svg></button>
      <button aria-label="New SpatiaLite Layer"><svg><use href="#spatialite"/></svg></button>
      <button aria-label="New Scratch Layer"><svg><use href="#memory"/></svg></button>
      <button aria-label="New Mesh Layer"><svg><use href="#mesh"/></svg></button>
      <button aria-label="New Virtual Layer"><svg><use href="#virtual"/></svg></button>
    </div>
    <div class="tools"><i class="grip"></i>
      <button disabled aria-label="Current Edits"><svg><use href="#pencils"/></svg></button>
      <button disabled aria-label="Toggle Editing"><svg><use href="#pencil"/></svg></button>
      <button disabled aria-label="Save Edits"><svg><use href="#saveedit"/></svg></button>
      <button class="drop" disabled aria-label="Digitize with Segment"><svg><use href="#segment"/></svg></button>
      <button disabled aria-label="Add Point Feature"><svg><use href="#points"/></svg></button>
      <button class="drop" disabled aria-label="Vertex Tool"><svg><use href="#vertex"/></svg></button>
      <button disabled aria-label="Modify Attributes"><svg><use href="#multiedit"/></svg></button>
      <button disabled aria-label="Delete Selected"><svg><use href="#trash"/></svg></button>
      <button disabled aria-label="Cut Features"><svg><use href="#cut"/></svg></button>
      <button disabled aria-label="Copy Features"><svg><use href="#copy"/></svg></button>
      <button disabled aria-label="Paste Features"><svg><use href="#paste"/></svg></button>
      <button disabled aria-label="Undo"><svg><use href="#undo"/></svg></button>
      <button disabled aria-label="Redo"><svg><use href="#redo"/></svg></button>
    </div>
    <div class="tools"><i class="grip"></i>
      <button disabled aria-label="Layer Labeling"><svg><use href="#abc"/></svg></button>
      <button disabled aria-label="Layer Diagrams"><svg><use href="#chart"/></svg></button>
      <i class="sep"></i>
      <button aria-label="Highlight Pinned Labels"><svg><use href="#pinlabel"/></svg></button>
      <button aria-label="Show Unplaced Labels"><svg><use href="#redlabel"/></svg></button>
      <i class="sep"></i>
      <button disabled aria-label="Pin Labels"><svg><use href="#pin2"/></svg></button>
      <button disabled aria-label="Show Labels"><svg><use href="#eyelabel"/></svg></button>
      <button disabled aria-label="Move Label"><svg><use href="#movelabel"/></svg></button>
      <button disabled aria-label="Rotate Label"><svg><use href="#rotlabel"/></svg></button>
      <button disabled aria-label="Change Label"><svg><use href="#editlabel"/></svg></button>
    </div>
    <div class="tools"><i class="grip"></i><button aria-label="MetaSearch"><svg><use href="#meta"/></svg></button></div>
    <div class="tools"><i class="grip"></i><button aria-label="Python Console"><svg><use href="#python"/></svg></button></div>
    <div class="tools"><i class="grip"></i><button aria-label="Help Contents"><svg><use href="#help"/></svg></button></div>
    <div class="tools"><i class="grip"></i></div>
  </div>

  <main class="work">
    <aside class="left">
      <section class="dock browser">
        <div class="dockhead"><h2>Browser</h2><button aria-label="Float"><svg><use href="#float"/></svg></button><button aria-label="Close"><svg><use href="#close"/></svg></button></div>
        <div class="docktools">
          <button aria-label="Add Layers"><svg><use href="#addlayer"/></svg></button>
          <button aria-label="Refresh"><svg><use href="#refresh"/></svg></button>
          <button aria-label="Filter Browser"><svg><use href="#funnel"/></svg></button>
          <button aria-label="Collapse All"><svg><use href="#collapse"/></svg></button>
          <button aria-label="Properties"><svg><use href="#info"/></svg></button>
        </div>
        <div class="treebox">
          <ul class="tree">
            <li><svg><use href="#quill"/></svg>SpatiaLite</li>
            <li><svg><use href="#postgres"/></svg>PostgreSQL</li>
            <li><svg><use href="#stac"/></svg>STAC</li>
            <li><svg><use href="#mssql"/></svg>MS SQL Server</li>
            <li><svg><use href="#globe"/></svg>WMS/WMTS</li>
            <li><svg><use href="#cloud"/></svg>Cloud</li>
            <li><svg><use href="#cube"/></svg>Scenes</li>
            <li><svg><use href="#sensor"/></svg>SensorThings</li>
            <li><svg><use href="#grid"/></svg>Vector Tiles</li>
            <li class="expanded"><svg><use href="#tiles"/></svg>XYZ Tiles</li>
            <li class="child"><svg><use href="#tiles"/></svg>Mapzen Global Terrain</li>
            <li class="child selected"><svg><use href="#tiles"/></svg>OpenStreetMap</li>
            <li><svg><use href="#wcs"/></svg>WCS</li>
            <li><svg><use href="#wfs"/></svg>WFS / OGC API - Features</li>
            <li><svg><use href="#arcgis"/></svg>ArcGIS REST Servers</li>
          </ul>
          <div class="vbar"><i class="cap"><b class="tri up"></b></i><i class="groove"></i><i class="thumb"></i><i class="cap"><b class="tri down"></b></i></div>
          <div class="hbar"><i class="cap"><b class="tri west"></b></i><i class="thumb"></i><i class="groove"></i><i class="cap"><b class="tri east"></b></i></div>
          <div class="corner"></div>
        </div>
      </section>
      <i class="dots-h"></i>
      <section class="dock layers">
        <div class="dockhead"><h2>Layers</h2><button aria-label="Float"><svg><use href="#float"/></svg></button><button aria-label="Close"><svg><use href="#close"/></svg></button></div>
        <div class="docktools">
          <button class="on" aria-label="Layer Styling Panel"><svg><use href="#brush"/></svg></button>
          <button aria-label="Add Group"><svg><use href="#addgroup"/></svg></button>
          <button class="menu" aria-label="Map Themes"><svg><use href="#eye"/></svg></button>
          <button class="menu" aria-label="Filter Legend"><svg><use href="#funnel"/></svg></button>
          <button class="more" aria-label="More"><svg viewBox="0 0 32 32"><path d="M8 10l6 6-6 6M17 10l6 6-6 6" fill="none" stroke="#444" stroke-width="2"/></svg></button>
        </div>
        <div class="layerlist"></div>
      </section>
    </aside>
    <i class="dots-v"></i>
    <section class="centre">
      <div class="temporal">
        <div class="dockhead"><h2>Temporal Controller</h2><button aria-label="Float"><svg><use href="#float"/></svg></button><button aria-label="Close"><svg><use href="#close"/></svg></button></div>
        <div class="modes">
          <button class="on" aria-label="Disabled"><svg viewBox="0 0 32 32"><circle cx="16" cy="16" r="13" fill="#eee" stroke="#555" stroke-width="2"/><path d="M16 6v10" stroke="#999" stroke-width="3"/><path d="M1 1l30 30M31 1L1 31" stroke="#c00d0d" stroke-width="3"/></svg></button>
          <button aria-label="Fixed range"><svg viewBox="0 0 32 32"><circle cx="16" cy="16" r="13" fill="#fff" stroke="#666" stroke-width="2"/><path d="M16 6v10l4 5" fill="none" stroke="#999" stroke-width="3"/></svg></button>
          <button aria-label="Animated"><svg viewBox="0 0 32 32"><circle cx="16" cy="16" r="13" fill="#fff" stroke="#666" stroke-width="2"/><path d="M13 9l12 7-12 8z" fill="#5c8f60" stroke="#3f6b43"/></svg></button>
          <button aria-label="Movie"><svg viewBox="0 0 32 32"><rect x="2" y="5" width="28" height="22" rx="2" fill="#fff" stroke="#444" stroke-width="2"/><path d="M6 8v17M26 8v17" stroke="#444" stroke-width="2" stroke-dasharray="2 2"/><path d="M11 9l11 7-11 8z" fill="#5c8f60" stroke="#3f6b43"/></svg></button>
          <span>Temporal navigation disabled</span>
          <button class="settings" aria-label="Settings"><svg><use href="#goldgear"/></svg></button>
        </div>
      </div>
      <i class="dots-h"></i>
      <div class="canvas"></div>
    </section>
    <i class="dots-v"></i>
    <aside class="right">
      <div class="dockhead"><h2>Layer Styling</h2><button aria-label="Float"><svg><use href="#float"/></svg></button><button aria-label="Close"><svg><use href="#close"/></svg></button></div>
      <p>Not supported or no layer</p>
    </aside>
  </main>

  <footer class="status">
    <label class="locator"><svg viewBox="0 0 26 26"><circle cx="11" cy="11" r="9" fill="none" stroke="#888" stroke-width="2"/><path d="M17 17l8 8" stroke="#888" stroke-width="3"/></svg><input type="text" placeholder="Type to locate (Ctrl+K)" aria-label="Locator"></label>
    <div class="field coord"><label for="coord">Coordinate</label><input id="coord" type="text" value="-36.8731°, 149.9153°"></div>
    <button class="plain mouse" aria-label="Toggle extents"><svg viewBox="0 0 32 32"><path d="M3 10Q8-2 15 2l13 17q2 10-6 12-8 1-10-5z" fill="#333"/><path d="M8 5l9 14M13 3l9 13M4 12l9 12" stroke="#eee" stroke-width="2"/><circle cx="20" cy="23" r="5" fill="#333" stroke="#eee" stroke-width="2"/><path d="M22 8l9-6M1 21h8" stroke="#333" stroke-width="2"/></svg></button>
    <div class="field scale"><label for="scale">Scale</label><select id="scale"><option>1:26852</option></select></div>
    <button class="plain lock" aria-label="Lock scale"><svg viewBox="0 0 24 32"><path d="M5 16V9q0-7 7-7t7 7v7" fill="none" stroke="#999" stroke-width="3"/><rect x="0" y="15" width="24" height="16" rx="3" fill="#666"/></svg></button>
    <div class="field"><label for="mag">Magnifier</label><span class="spin"><input id="mag" type="text" value="100%"><i><b class="tri up"></b><b class="tri down"></b></i></span></div>
    <div class="field rot"><label for="rot">Rotation</label><span class="spin"><input id="rot" type="text" value="0.0 °"><i><b class="tri up"></b><b class="tri down"></b></i></span></div>
    <label class="render"><input type="checkbox" checked>Render</label>
    <button class="plain crs"><svg viewBox="0 0 30 30"><circle cx="15" cy="15" r="12" fill="#ddd" stroke="#777" stroke-width="2"/><path d="M1 11h28M1 19h28M15 2v26M9 4q-4 11 0 22M21 4q4 11 0 22M4 7h22M4 23h22" fill="none" stroke="#777" stroke-width="2"/></svg>EPSG:4326</button>
    <button class="plain msg" aria-label="Messages"><svg viewBox="0 0 32 32"><path d="M16 1c9 0 16 5 16 13 0 6-3 9-5 10l3 7q-6 0-9-5-21 2-21-12C0 6 7 1 16 1z" fill="#666"/><path d="M7 12h4v4H7zM14 12h4v4h-4zM21 12h4v4h-4z" fill="#fff"/></svg></button>
    <i class="sizegrip"></i>
  </footer>
</div>

<svg class="annotation" viewBox="0 0 180 160" aria-hidden="true"><path d="M35 14Q28 16 22 30 12 52 12 76q0 30 18 50 20 22 43 29 22 5 37 0 12-4 24-17Q163 112 164 85V58Q159 40 155 28 146 27 138 22 118 13 95 13z" fill="none" stroke="#e81c1c" stroke-width="8" stroke-linejoin="round"/></svg>
</body>
</html>
```
FILE: styles.css
```css
* { box-sizing: border-box; }

body {
  margin: 0;
  padding: 2px;
  height: 100vh;
  background: linear-gradient(90deg, #a9adae, #b4b4b0 30%, #a4a8aa 70%, #b8bcc0);
  font-family: "DejaVu Sans", sans-serif;
  font-size: 24px;
  color: #111;
}

.defs { position: absolute; width: 0; height: 0; }

h1, h2, p, ul { margin: 0; padding: 0; font-weight: normal; }

button {
  margin: 0;
  padding: 0;
  border: 0;
  background: none;
  font: inherit;
  color: inherit;
  display: flex;
  align-items: center;
  justify-content: center;
}

svg { display: block; flex: none; }

.window {
  display: flex;
  flex-direction: column;
  height: 100%;
  background: #eee;
  border-radius: 14px;
  overflow: hidden;
  box-shadow: 0 0 0 2px #999;
}

/* Title bar and menus */
.titlebar {
  display: flex;
  align-items: center;
  height: 60px;
  padding: 0 2px 0 17px;
  background: #f5eff8;
  flex: none;
}
.logo { width: 30px; height: 30px; }
.titlebar h1 {
  flex: 1;
  margin-left: 11px;
  font-family: "Open Sans", sans-serif;
  font-size: 23px;
}
.winbuttons { display: flex; }
.winbuttons button { width: 92px; height: 60px; }
.winbuttons svg { width: 20px; height: 20px; }

.menubar {
  display: flex;
  height: 40px;
  padding-left: 5px;
  border-bottom: 2px solid #d5d5d5;
  flex: none;
}
.menubar button { padding: 0 15px; white-space: nowrap; }
.menubar u { text-decoration-thickness: 2px; text-underline-offset: 3px; }

/* Toolbars */
.toolrow { display: flex; gap: 2px; height: 78px; flex: none; }
.tools {
  display: flex;
  align-items: center;
  gap: 2px;
  padding-right: 8px;
  border-bottom: 2px solid #b5b5b5;
  background: linear-gradient(#fbfbfb, #ececec);
}
.tools:last-child { flex: 1; }
.grip {
  width: 10px;
  height: 34px;
  margin: 0 6px 0 8px;
  background: conic-gradient(from 270deg at 2px 2px, #c0c0c0 25%, transparent 0) 0 0 / 6px 6px;
}
.tools button { width: 64px; height: 62px; border: 2px solid transparent; border-radius: 4px; }
.tools button svg { width: 48px; height: 48px; }
.tools button.drop { width: 88px; gap: 8px; padding-left: 2px; }
.tools button.drop::after {
  content: "";
  border: 8px solid transparent;
  border-top-color: #555;
  border-bottom: 0;
}
.tools button:disabled { color: inherit; }
.tools button:disabled svg { opacity: 0.3; filter: grayscale(0.5); }
.tools button:disabled::after { opacity: 0.25; }
.sep { width: 12px; height: 38px; border-right: 2px solid #fff; background: linear-gradient(90deg, transparent 6px, #d0d0d0 6px 8px, transparent 8px); }

button.on, .tools button.on { background: #dadada; border: 2px solid #acacac; border-radius: 4px; }

/* Work area */
.work {
  display: grid;
  grid-template-columns: 268px 12px minmax(0, 1604fr) 14px minmax(0, 786fr);
  flex: 1;
  min-height: 0;
}
.dockhead { display: flex; align-items: center; gap: 6px; height: 40px; padding: 0 4px 0 8px; flex: none; }
.dockhead h2 { flex: 1; font-size: 24px; }
.dockhead svg { width: 22px; height: 22px; }

.left { display: flex; flex-direction: column; min-height: 0; }
.dock { display: flex; flex-direction: column; }
.browser { flex: 690; min-height: 0; }
.layers { flex: 662; min-height: 0; }
.docktools { display: flex; align-items: center; gap: 2px; padding: 5px 0 7px 8px; height: 60px; flex: none; }
.docktools button { width: 48px; height: 46px; flex: none; }
.docktools svg { width: 30px; height: 30px; }
.docktools .menu { position: relative; }
.docktools .menu::after {
  content: "";
  position: absolute;
  right: 4px;
  bottom: 7px;
  border: 5px solid transparent;
  border-top: 6px solid #555;
  border-bottom: 0;
}
.docktools .more { width: 30px; margin-left: 28px; }

.treebox {
  display: grid;
  grid-template-columns: minmax(0, 1fr) 28px;
  grid-template-rows: minmax(0, 1fr) 30px;
  flex: 1;
  min-height: 0;
  border: 2px solid #b5b5b5;
  border-left-width: 1px;
  background: #fff;
}
.tree { list-style: none; overflow: hidden; padding: 2px 0; }
.tree li {
  display: flex;
  align-items: center;
  gap: 12px;
  height: 36px;
  padding-left: 39px;
  white-space: nowrap;
}
.tree svg { width: 32px; height: 32px; }
.tree .child { padding-left: 71px; }
.tree .selected { background: #308cc6; color: #e4f0f8; }
.tree .expanded { padding-left: 9px; }
.tree .expanded::before {
  content: "";
  margin-right: 2px;
  border: 8px solid transparent;
  border-top-color: #555;
  border-bottom: 0;
}

.tri { border: 7px solid transparent; }
.up { border-bottom-color: #555; border-top: 0; }
.down { border-top-color: #555; border-bottom: 0; }
.west { border-right-color: #555; border-left: 0; }
.east { border-left-color: #555; border-right: 0; }
.cap { display: flex; align-items: center; justify-content: center; background: #fafafa; }
.thumb { background: #fafafa; }
.groove { background: #e3e3e3; }
.vbar { display: flex; flex-direction: column; border-left: 2px solid #b5b5b5; }
.vbar .cap { height: 27px; }
.vbar .groove { flex: 126; border: solid #b5b5b5; border-width: 2px 0; }
.vbar .thumb { flex: 378; border-bottom: 2px solid #b5b5b5; background: linear-gradient(90deg, #fff, #f0f0f0); }
.hbar { display: flex; border-top: 2px solid #b5b5b5; }
.hbar .cap { width: 27px; }
.hbar .thumb { flex: 112; border: solid #b5b5b5; border-width: 0 2px; background: linear-gradient(#fff, #f0f0f0); }
.hbar .groove { flex: 72; border-right: 2px solid #b5b5b5; }
.corner { border: solid #b5b5b5; border-width: 2px 0 0 2px; background: #eee; }
.layerlist { flex: 1; border: 2px solid #b5b5b5; border-left-width: 1px; background: #fff; }

.dots-h, .dots-v { background: conic-gradient(from 270deg at 2px 2px, #bbb 25%, transparent 0) 0 0 / 6px 6px; }
.dots-h { width: 34px; height: 2px; margin: 4px auto 6px; flex: none; }
.dots-v { width: 2px; height: 34px; align-self: center; justify-self: center; }

.centre { display: flex; flex-direction: column; min-height: 0; }
.temporal { flex: 365; min-height: 0; }
.modes { display: flex; align-items: center; gap: 4px; padding: 10px 8px 0 0; }
.modes button { width: 48px; height: 46px; border: 2px solid #bbb; border-radius: 4px; background: linear-gradient(#fff, #eee); }
.modes button.on { background: #dadada; }
.modes svg { width: 32px; height: 32px; }
.modes span { flex: 1; }
.modes .settings { border: 0; background: none; width: 32px; }
.canvas { flex: 986; background: #fff; border: solid #b5b5b5; border-width: 0 2px 2px; }

.right { display: flex; flex-direction: column; }
.right .dockhead { padding: 0 6px; }
.right p { flex: 1; display: flex; align-items: center; justify-content: center; }

/* Status bar */
.status {
  display: flex;
  align-items: center;
  height: 58px;
  padding: 0 4px 0 8px;
  font-size: 18px;
  flex: none;
}
.status input, .status select { font: inherit; color: #111; }
.locator, .field > input, .field select, .spin {
  height: 46px;
  border: 2px solid #b0b0b0;
  border-radius: 4px;
  background: #fff;
}
.status .locator { display: flex; align-items: center; gap: 14px; width: 498px; padding-left: 16px; font-size: 24px; margin-right: auto; }
.locator svg { width: 26px; height: 26px; }
.locator input { flex: 1; min-width: 0; border: 0; padding: 0; background: none; outline: 0; }
.locator input::placeholder { color: #888; opacity: 1; }
.field { display: flex; align-items: center; gap: 8px; }
.coord input { width: 236px; text-align: center; padding: 0; }
.mouse { margin: 0 26px 0 8px; }
.mouse svg { width: 32px; height: 32px; }
.field select {
  width: 190px;
  padding-left: 6px;
  appearance: none;
  background:
    linear-gradient(to top right, transparent 50%, #555 50%) right 19px center / 8px 8px no-repeat,
    linear-gradient(to top left, transparent 50%, #555 50%) right 11px center / 8px 8px no-repeat,
    linear-gradient(90deg, #b5b5b5 2px, #f6f6f6 2px) right / 38px 100% no-repeat,
    #fff;
}
.lock { margin: 0 18px 0 26px; }
.lock svg { width: 24px; height: 32px; }
.spin { display: flex; width: 180px; height: 44px; }
.spin input { flex: 1; min-width: 0; border: 0; padding: 0 0 0 8px; background: none; }
.spin i { display: flex; flex-direction: column; align-items: center; justify-content: center; gap: 10px; width: 28px; border-left: 2px solid #b5b5b5; background: #f8f8f8; }
.rot { margin-left: 20px; gap: 20px; }
.render { display: flex; align-items: center; gap: 10px; margin-left: 14px; }
.render input {
  appearance: none;
  width: 28px;
  height: 28px;
  margin: 0;
  border: 2px solid #b5b5b5;
  background: #fff;
  display: flex;
  align-items: center;
  justify-content: center;
}
.render input:checked::before { content: "✔"; font-size: 26px; line-height: 24px; color: #000; }
.crs { gap: 6px; margin-left: 30px; }
.crs svg { width: 30px; height: 30px; }
.msg { margin: 0 34px 0 46px; }
.msg svg { width: 32px; height: 32px; }
.sizegrip {
  align-self: flex-end;
  width: 24px;
  height: 24px;
  clip-path: polygon(100% 0, 100% 100%, 0 100%);
  background: conic-gradient(from 270deg at 2px 2px, #bbb 25%, transparent 0) 0 0 / 6px 6px;
}

.annotation { position: absolute; left: 230px; top: 10px; width: 180px; height: 160px; pointer-events: none; }
```
